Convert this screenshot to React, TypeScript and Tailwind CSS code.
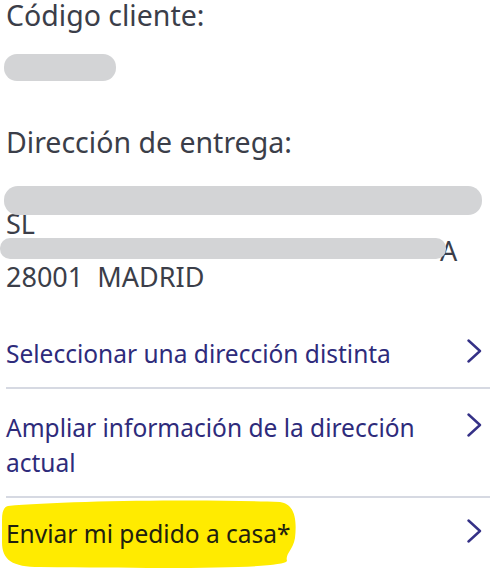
import React from "react";

function Chevron() {
  return (
    <svg width="16" height="24" viewBox="0 0 16 24" fill="none" className="shrink-0 mt-[3px] mr-[8px]">
      <path d="M2.5 1.5 L14 12 L2.5 22.5" stroke="#353187" strokeWidth="2.4" strokeLinecap="round" strokeLinejoin="round" />
    </svg>
  );
}

export default function App() {
  const font = { fontFamily: '"Noto Sans", "Open Sans", sans-serif' };
  return (
    <div className="w-[493px] h-[570px] bg-white overflow-hidden" style={font}>
      <div className="pl-[6px]">
        <div className="text-[28.5px] leading-[30px] text-[#3b3e49]">Código cliente:</div>
        <div className="mt-[24px] -ml-[2px] w-[112px] h-[27px] rounded-[13px] bg-[#d3d4d6]" />

        <div className="mt-[46px] text-[28.5px] leading-[30px] text-[#3b3e49]">Dirección de entrega:</div>

        <div className="mt-[27.5px] text-[27px] leading-[26.5px] text-[#3b3e49]">
          <div className="h-[26.5px] relative">
            <div className="absolute -left-[2px] top-[1px] w-[478px] h-[29px] rounded-[14px] bg-[#d3d4d6]" />
          </div>
          <div>SL</div>
          <div className="h-[26.5px] relative">
            <span className="absolute left-[434px] top-0">A</span>
            <div className="absolute -left-[6px] top-[0px] w-[446px] h-[21px] rounded-[10px] bg-[#d3d4d6]" />
          </div>
          <div>28001&nbsp;&nbsp;MADRID</div>
        </div>

        <div className="mt-[45.5px] text-[24.5px] leading-[35px] text-[#2e2b7b] mr-[3px]">
          <div className="flex items-start justify-between pb-[16px] border-b-2 border-[#d6d9e2]">
            <span>Seleccionar una dirección distinta</span>
            <Chevron />
          </div>
          <div className="flex items-start justify-between pt-[21px] pb-[16px] border-b-2 border-[#d6d9e2]">
            <span>Ampliar información de la dirección<br />actual</span>
            <Chevron />
          </div>
          <div className="flex items-start justify-between pt-[18px] relative">
            <svg className="absolute -left-[6px] top-[2px]" width="297" height="70" viewBox="0 0 297 70">
              <path
                d="M8 6 C 60 1, 200 -1, 280 2 C 295 4, 297 20, 295 38 C 293 50, 285 54, 287 61 C 282 68, 200 69, 40 67 C 12 67, 2 60, 2 42 L 2 20 C 2 11, 4 7, 8 6 Z"
                fill="#ffeb00"
              />
            </svg>
            <span className="relative text-[#20200f]">Enviar mi pedido a casa*</span>
            <Chevron />
          </div>
        </div>
      </div>
    </div>
  );
}
